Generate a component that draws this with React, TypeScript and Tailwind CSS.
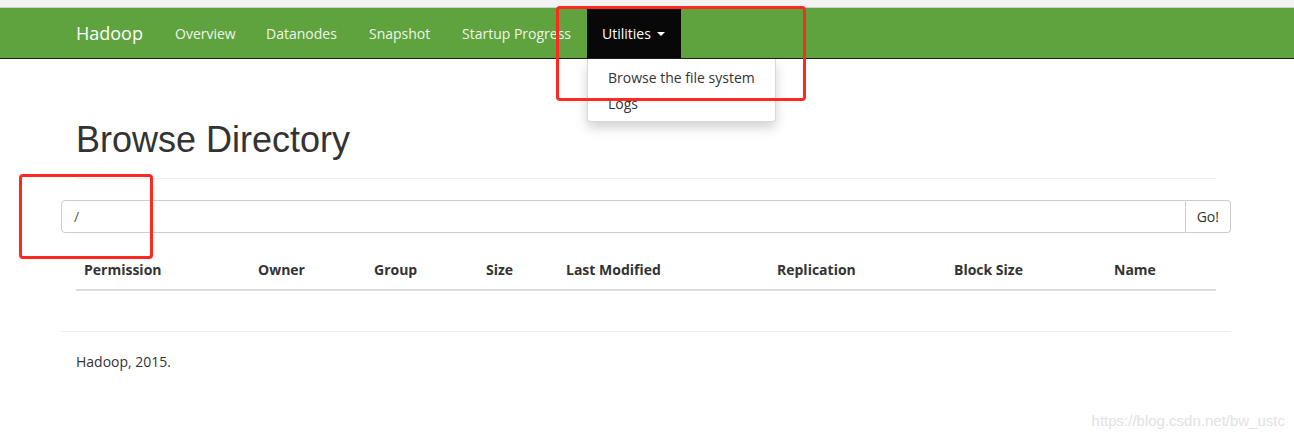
const navItems = [
  { label: "Overview", w: "w-[91px]" },
  { label: "Datanodes", w: "w-[103px]" },
  { label: "Snapshot", w: "w-[93px]" },
  { label: "Startup Progress", w: "w-[140px]" },
];

const columns = [
  "Permission",
  "Owner",
  "Group",
  "Size",
  "Last Modified",
  "Replication",
  "Block Size",
  "Name",
];

const App = () => {
  return (
    <div
      className="relative min-h-[438px] bg-white text-[14px] text-[#333]"
      style={{ fontFamily: '"Open Sans", "Noto Sans", sans-serif' }}
    >
      <div className="h-[8px] bg-[#f3f3f3] border-b border-[#d0d0d0]" />

      {/* navbar */}
      <nav className="bg-[#5fa33e] border-b border-[#1e1e1e]">
        <div className="ml-[61px] w-[1170px] flex h-[50px] items-stretch">
          <a className="flex items-center w-[99px] px-[15px] text-[18px] text-white">Hadoop</a>
          <ul className="flex items-stretch">
            {navItems.map((item) => (
              <li key={item.label} className={`flex items-center px-[15px] whitespace-nowrap text-[#eef5ea] ${item.w}`}>
                {item.label}
              </li>
            ))}
            <li className="relative flex items-center w-[94px] px-[15px] bg-[#080808] text-white">
              Utilities
              <span className="ml-[6px] mt-[2px] border-x-[4px] border-t-[4px] border-x-transparent border-t-white" />
              <div className="absolute left-0 top-[51px] z-10 w-[189px] pt-[6px] pb-[4px] bg-white border border-black/15 border-t-0 rounded-b-[4px] shadow-[0_6px_12px_rgba(0,0,0,0.175)]">
                <div className="px-[20px] leading-[26px] text-[#333] whitespace-nowrap">Browse the file system</div>
                <div className="px-[20px] leading-[26px] text-[#333]">Logs</div>
              </div>
            </li>
          </ul>
        </div>
      </nav>

      <main className="ml-[61px] w-[1170px]">
        <div className="mx-[15px] mt-[61px] pb-[18px] border-b border-[#eee]">
          <h1
            className="text-[36px] leading-[40px] text-[#333]"
            style={{ fontFamily: '"Liberation Sans", Arial, sans-serif' }}
          >
            Browse Directory
          </h1>
        </div>

        <div className="mt-[21px] flex h-[33px]">
          <div className="flex-1 flex items-center px-[12px] border border-[#ccc] rounded-l-[4px] text-[#555]">
            /
          </div>
          <button className="px-[11px] border border-l-0 border-[#ccc] rounded-r-[4px] text-[#333] bg-white">
            Go!
          </button>
        </div>

        <div className="mx-[15px] mt-[17px] grid grid-cols-[174px_116px_112px_80px_211px_177px_160px_110px] border-b-2 border-[#ddd]">
          {columns.map((c) => (
            <div key={c} className="px-[8px] h-[39px] flex items-center font-bold text-[#333]">
              {c}
            </div>
          ))}
        </div>

        <div className="mt-[40px] border-t border-[#eee]" />
        <p className="mt-[20px] mx-[15px] leading-[20px]">Hadoop, 2015.</p>
      </main>

      {/* annotation boxes */}
      <div className="absolute left-[556px] top-[6px] w-[250px] h-[95px] border-[3px] border-[#ff2a1f] rounded-[4px] z-20" />
      <div className="absolute left-[19px] top-[174px] w-[134px] h-[85px] border-[3px] border-[#ff2a1f] rounded-[4px] z-20" />

      <div
        className="absolute right-[9px] top-[410px] text-[15px] text-[#e2e2e2]"
        style={{ fontFamily: '"Liberation Sans", Arial, sans-serif' }}
      >
        https://blog.csdn.net/bw_ustc
      </div>
    </div>
  );
};

export default App;
